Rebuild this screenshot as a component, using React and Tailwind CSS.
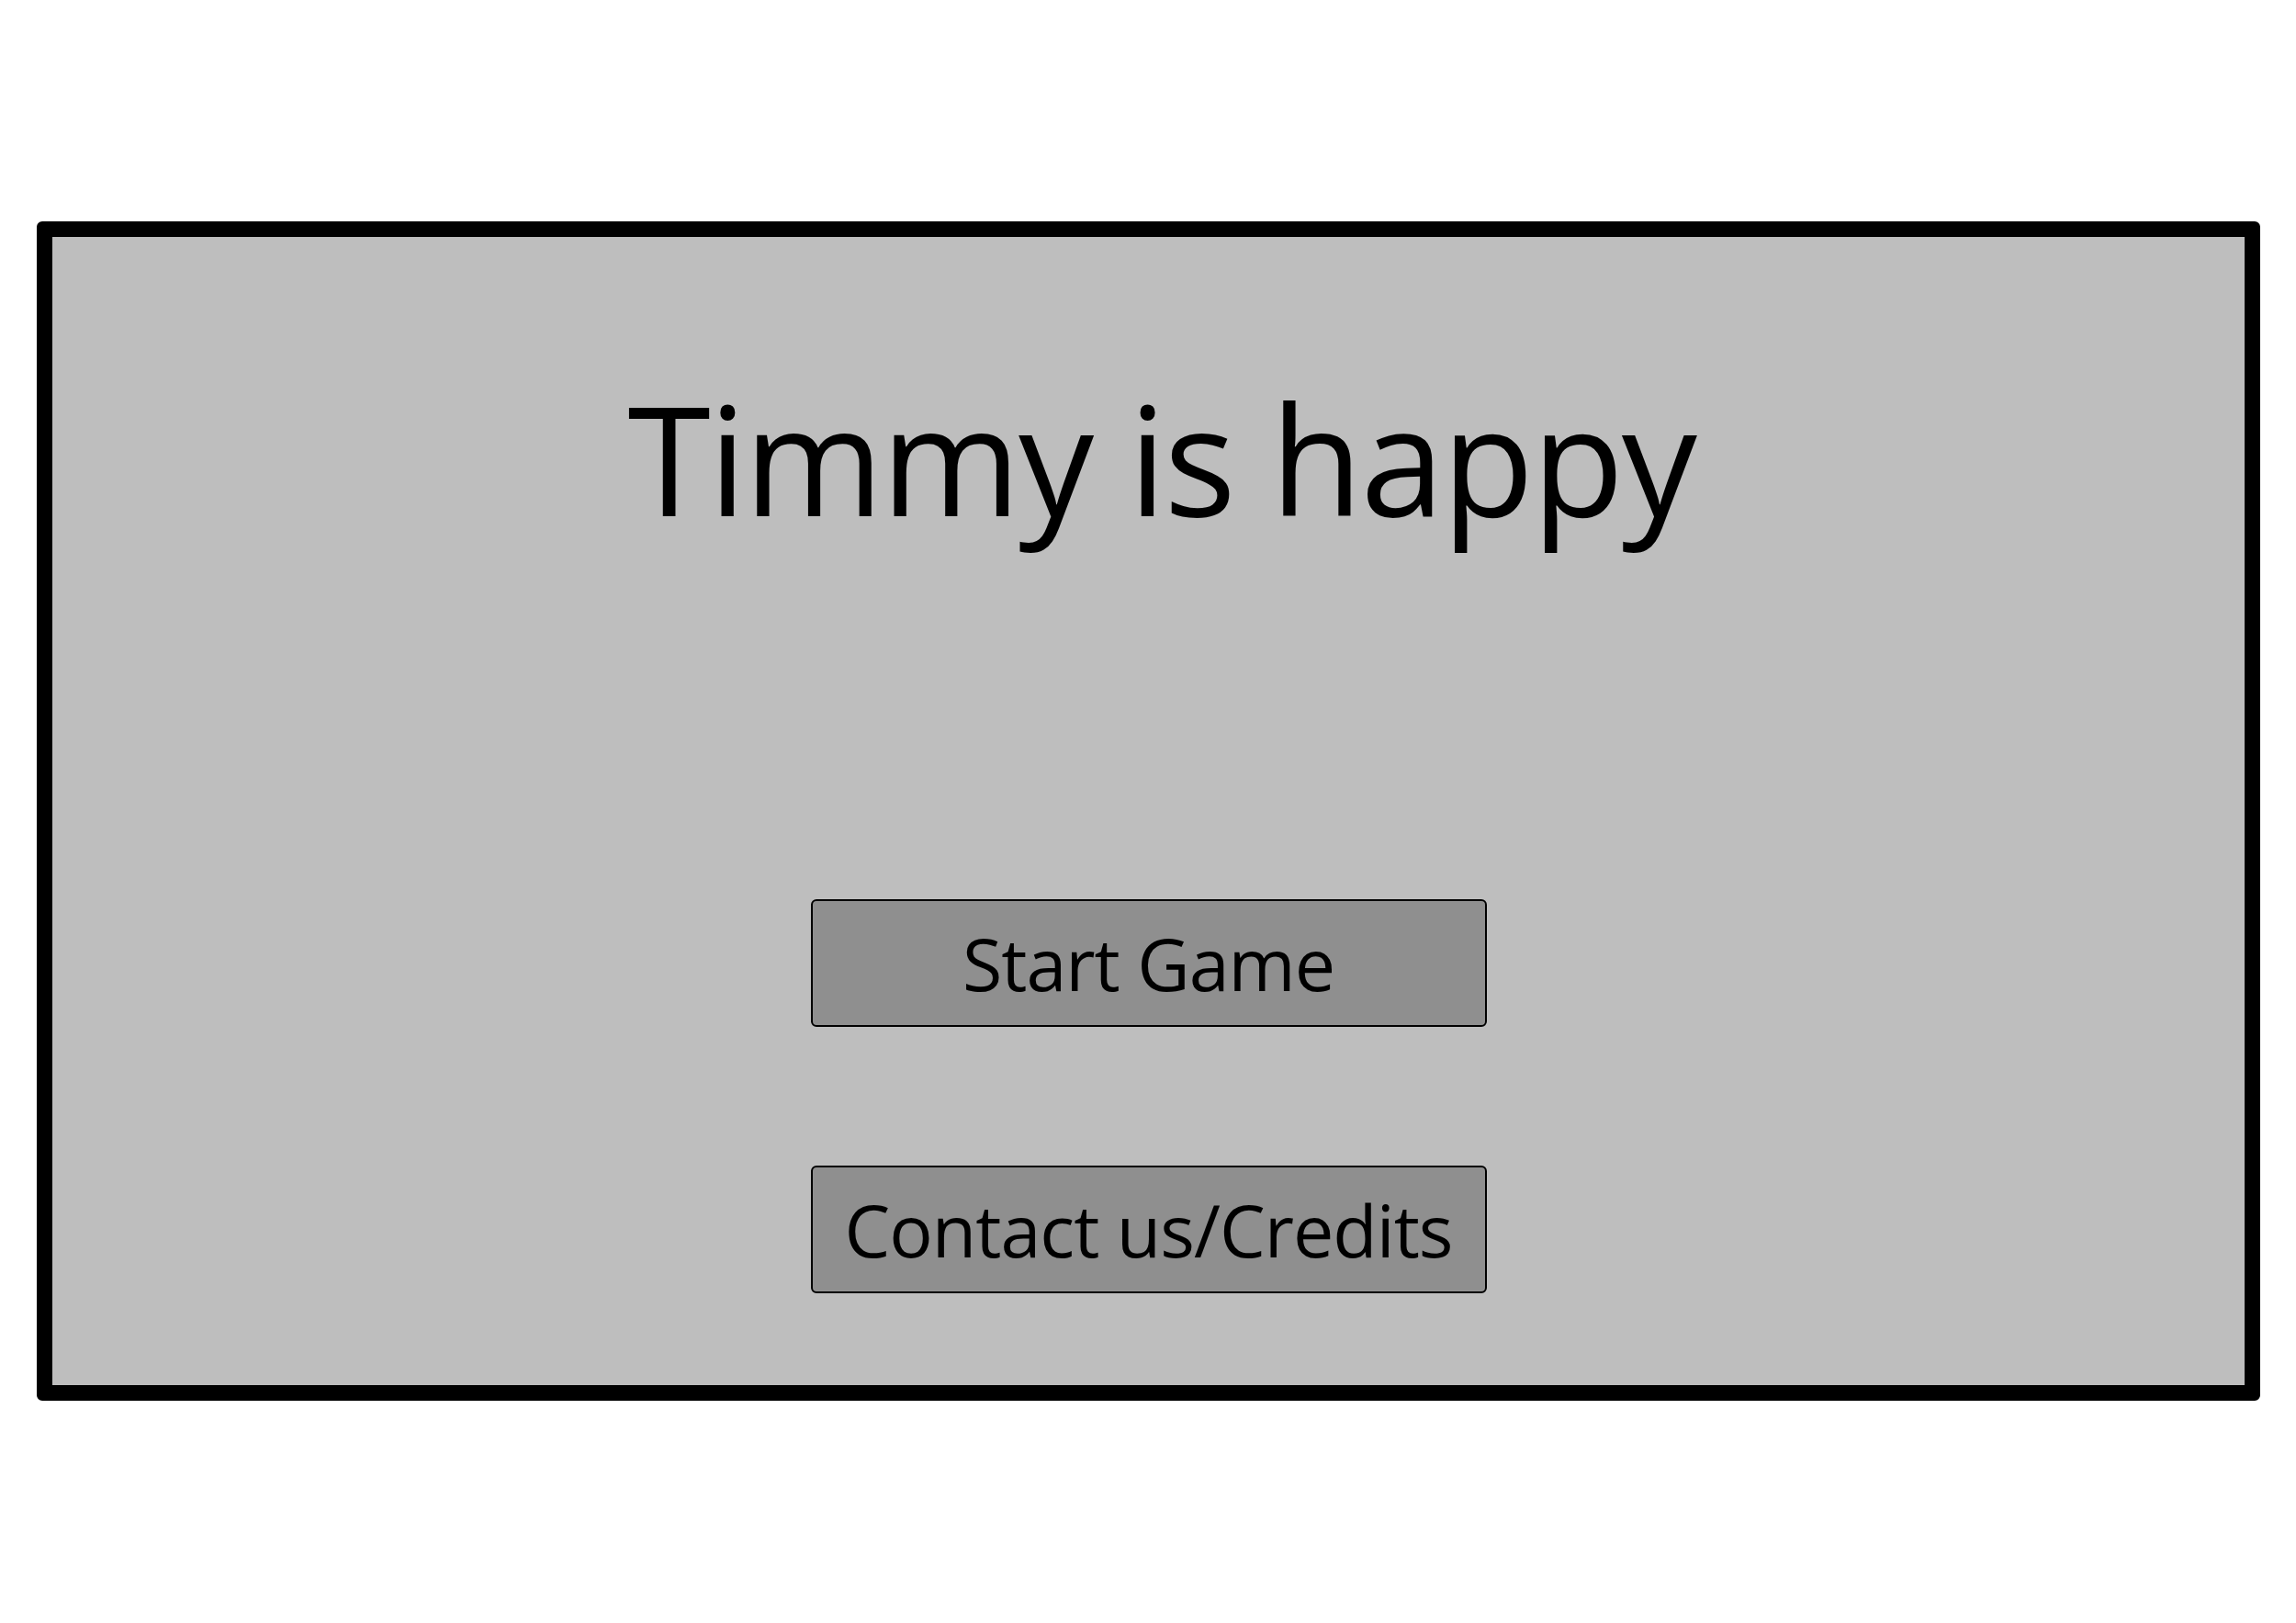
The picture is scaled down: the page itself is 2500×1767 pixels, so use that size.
import React from "react";

const MenuButton = ({ label }) => {
  return (
    <button className="w-[736px] h-[139px] bg-[#8f8f8f] border-2 border-black rounded-[6px] flex items-center justify-center text-black text-[79px] leading-none tracking-[-1px] font-['Open_Sans',sans-serif]">
      {label}
    </button>
  );
};

export default function App() {
  return (
    <div className="w-[2500px] h-[1767px] bg-white pt-[241px] pl-[40px]">
      <div className="w-[2421px] h-[1284px] bg-[#bebebe] border-[17px] border-black rounded-[6px] flex flex-col items-center">
        <h1 className="mt-[159px] pl-[28px] text-[164px] leading-none tracking-[-2.5px] text-black font-['Open_Sans',sans-serif]">
          Timmy is happy
        </h1>
        <div className="mt-[398px] flex flex-col items-center gap-[151px]">
          <MenuButton label="Start Game" />
          <MenuButton label="Contact us/Credits" />
        </div>
      </div>
    </div>
  );
}
